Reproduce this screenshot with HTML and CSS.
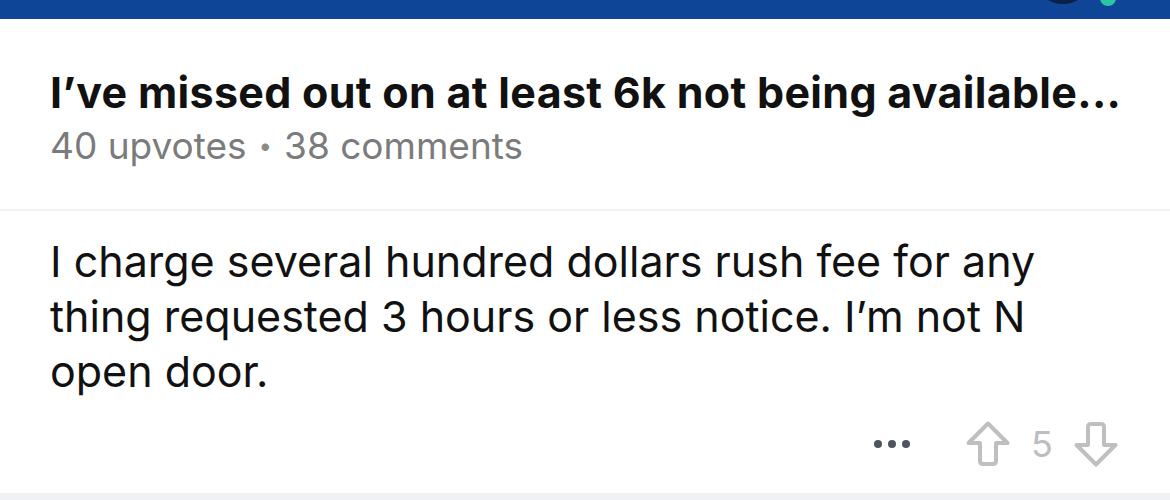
FILE: index.html
```html
<!DOCTYPE html>
<html>
<head>
<meta charset="utf-8">
<link rel="stylesheet" href="styles.css">
</head>
<body>
<div class="topbar">
  <span class="avatar"></span>
  <span class="online"></span>
</div>
<section class="post">
  <h1 class="title">I’ve missed out on at least 6k not being available...</h1>
  <div class="meta"><span>40 upvotes</span><span class="dot">•</span><span>38 comments</span></div>
</section>
<section class="comment">
  <p class="body">I charge several hundred dollars rush fee for any thing requested 3 hours or less notice. I’m not N open door.</p>
  <div class="actions">
    <span class="more"><i></i><i></i><i></i></span>
    <span class="vote">
      <svg class="arrow" viewBox="0 0 44 46" width="44" height="46"><path d="M22 2.5 L41.5 22 H30 V40 Q30 43 27 43 H17 Q14 43 14 40 V22 H2.5 Z" fill="none" stroke="#bfbfbf" stroke-width="4" stroke-linejoin="round"/></svg>
      <span class="count">5</span>
      <svg class="arrow" viewBox="0 0 44 46" width="44" height="46"><path d="M22 43.5 L41.5 24 H30 V6 Q30 3 27 3 H17 Q14 3 14 6 V24 H2.5 Z" fill="none" stroke="#bfbfbf" stroke-width="4" stroke-linejoin="round"/></svg>
    </span>
  </div>
</section>
<div class="bottombar"></div>
</body>
</html>
```
FILE: styles.css
```css
html, body {
  margin: 0;
  padding: 0;
  background: #ffffff;
  font-family: Inter, "Noto Sans", sans-serif;
}
body {
  width: 1170px;
  height: 500px;
  overflow: hidden;
  display: flex;
  flex-direction: column;
}
.topbar {
  height: 19px;
  background: #0e4597;
  position: relative;
  flex: none;
}
.avatar {
  position: absolute;
  left: 1040px;
  top: -30px;
  width: 46px;
  height: 34px;
  border-radius: 50%;
  background: #0a1f4a;
}
.online {
  position: absolute;
  left: 1100px;
  top: -10px;
  width: 16px;
  height: 16px;
  border-radius: 50%;
  background: #2cc6a4;
}
.post {
  box-sizing: border-box;
  padding: 47px 50px 0;
  height: 192px;
  border-bottom: 2px solid #f2f2f2;
  flex: none;
}
.title {
  margin: 0;
  font-size: 43px;
  font-weight: 700;
  line-height: 52px;
  color: #111111;
  white-space: nowrap;
  letter-spacing: 0.3px;
}
.meta {
  margin-top: 6px;
  font-size: 37px;
  line-height: 44px;
  color: #7b7b7b;
  display: flex;
  gap: 12px;
}
.meta .dot {
  font-size: 24px;
  color: #8a8a8a;
}
.comment {
  padding: 0 52px 0 50px;
  flex: 1;
  display: flex;
  flex-direction: column;
}
.body {
  margin: 23px 0 0;
  font-size: 43px;
  line-height: 55px;
  color: #111111;
  max-width: 1040px;
}
.actions {
  margin-top: 22px;
  display: flex;
  justify-content: flex-end;
  align-items: center;
  gap: 56px;
}
.more {
  display: flex;
  gap: 6px;
}
.more i {
  width: 8px;
  height: 8px;
  border-radius: 50%;
  background: #4d5561;
  display: block;
}
.vote {
  display: flex;
  align-items: center;
  gap: 21px;
}
.count {
  font-size: 36px;
  color: #bdbdbd;
}
.bottombar {
  height: 7px;
  background: #f0f1f4;
  flex: none;
}
```
